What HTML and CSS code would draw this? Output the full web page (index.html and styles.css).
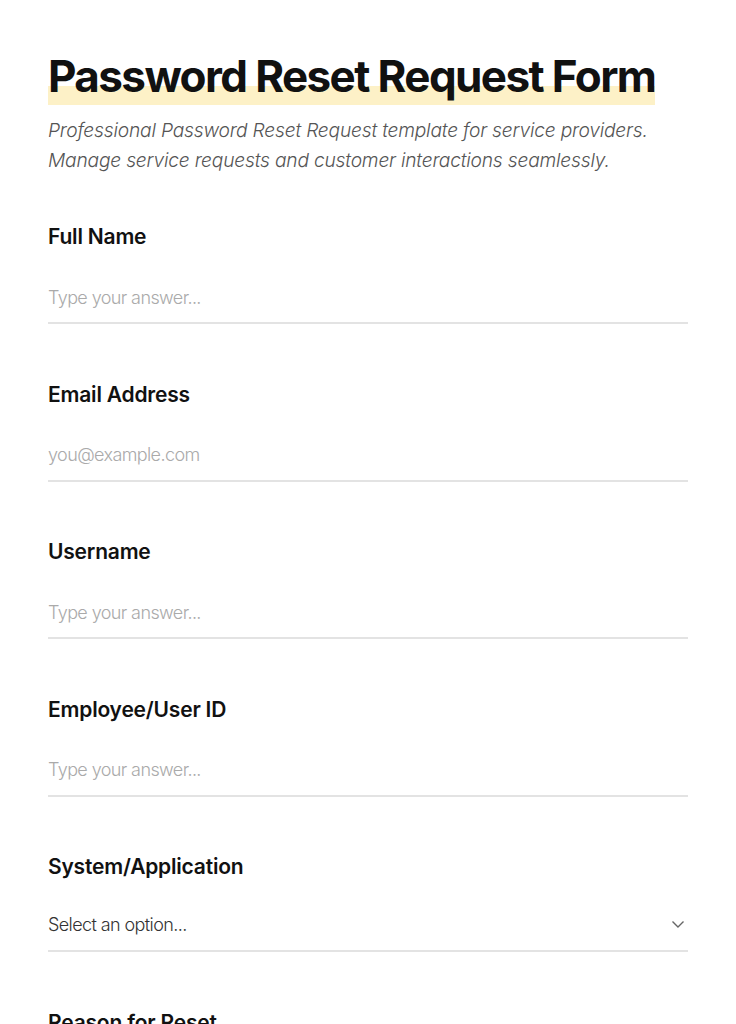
FILE: index.html
```html
<!DOCTYPE html>
<html lang="en">
<head>
    <meta charset="UTF-8">
    <meta name="viewport" content="width=device-width, initial-scale=1.0">
    <title>Password Reset Request Form</title>
    <link rel="stylesheet" href="styles.css">
</head>
<body>
    <div class="container">
        <h1><span class="highlight">Password Reset Request Form</span></h1>
        <p class="intro">Professional Password Reset Request template for service providers. Manage service requests and customer interactions seamlessly.</p>

        <form>
            <div class="field">
                <label for="fullName">Full Name</label>
                <input type="text" id="fullName" placeholder="Type your answer...">
            </div>
            <div class="field">
                <label for="email">Email Address</label>
                <input type="email" id="email" placeholder="you@example.com">
            </div>
            <div class="field">
                <label for="username">Username</label>
                <input type="text" id="username" placeholder="Type your answer...">
            </div>
            <div class="field">
                <label for="userId">Employee/User ID</label>
                <input type="text" id="userId" placeholder="Type your answer...">
            </div>
            <div class="field">
                <label for="system">System/Application</label>
                <div class="select-wrap">
                    <select id="system">
                        <option value="">Select an option...</option>
                        <option>Email</option>
                        <option>VPN</option>
                        <option>Intranet</option>
                    </select>
                    <svg class="chevron" width="14" height="10" viewBox="0 0 14 10"><path d="M1.5 2.5l5.5 5.5 5.5-5.5" fill="none" stroke="#666" stroke-width="1.4"/></svg>
                </div>
            </div>
            <div class="field">
                <label for="reason">Reason for Reset</label>
                <input type="text" id="reason" placeholder="Type your answer...">
            </div>
        </form>
    </div>
</body>
</html>
```

FILE: styles.css
```css
body {
    margin: 0;
    font-family: Inter, 'Noto Sans', Arial, sans-serif;
    color: #111;
    background-color: #fff;
}
.container {
    padding: 50px 48px;
    max-width: 640px;
}
h1 {
    margin: 0;
    font-size: 44px;
    line-height: 53px;
    font-weight: 700;
    letter-spacing: -1.6px;
}
.highlight {
    display: inline-block;
    padding-bottom: 2px;
    background: linear-gradient(to bottom, transparent 66%, #fdf1c7 66%);
}
.intro {
    margin: 10px 0 0;
    font-size: 19.2px;
    line-height: 30px;
    font-style: italic;
    font-weight: 300;
    color: #555;
    letter-spacing: -0.2px;
}
form {
    margin-top: 47px;
}
.field {
    margin-bottom: 55.5px;
}
label {
    display: block;
    font-size: 21px;
    line-height: 29px;
    font-weight: 600;
    letter-spacing: -0.2px;
}
input, select {
    display: block;
    width: 100%;
    height: 52px;
    box-sizing: border-box;
    margin-top: 21px;
    padding: 13px 0 13px;
    border: none;
    border-bottom: 2px solid #e3e3e3;
    font-family: inherit;
    font-size: 18px;
    line-height: 24px;
    color: #222;
    background: transparent;
    outline: none;
    letter-spacing: -0.6px;
}
input::placeholder {
    color: #aaa;
    font-weight: 300;
}
.select-wrap {
    position: relative;
    margin-top: 20px;
}
select {
    margin-top: 0;
    height: 51px;
    padding: 12px 0 13px;
    appearance: none;
    -webkit-appearance: none;
    border-radius: 0;
    color: #333;
    font-weight: 300;
}
.chevron {
    position: absolute;
    right: 3px;
    top: 18px;
    pointer-events: none;
}
```
